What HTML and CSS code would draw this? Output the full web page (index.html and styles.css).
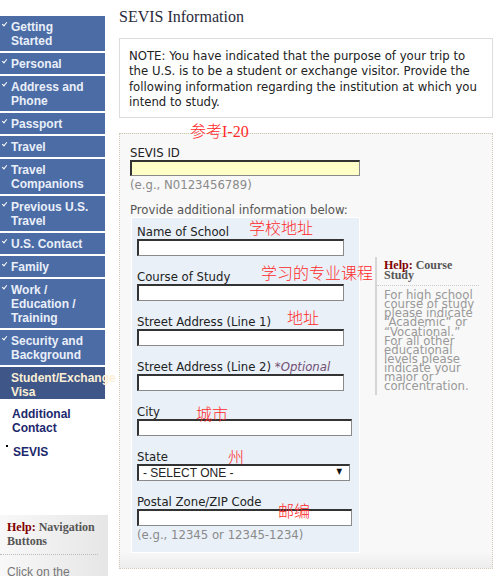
FILE: index.html
```html
<!DOCTYPE html>
<html lang="en">
<head>
    <meta charset="UTF-8">
    <meta name="viewport" content="width=device-width, initial-scale=1.0">
    <title>SEVIS Information</title>
    <link rel="stylesheet" href="styles.css">
</head>
<body>
    <div class="page">
        <!-- left navigation -->
        <aside class="side">
            <ul class="steps">
                <li class="done">Getting Started</li>
                <li class="done">Personal</li>
                <li class="done">Address and Phone</li>
                <li class="done">Passport</li>
                <li class="done">Travel</li>
                <li class="done">Travel Companions</li>
                <li class="done">Previous U.S. Travel</li>
                <li class="done">U.S. Contact</li>
                <li class="done">Family</li>
                <li class="done">Work / Education / Training</li>
                <li class="done">Security and Background</li>
                <li class="current">Student/Exchange Visa</li>
            </ul>
            <ul class="substeps">
                <li>Additional Contact</li>
                <li class="active">SEVIS</li>
            </ul>
            <div class="side-help">
                <h4><span class="help-word">Help:</span> Navigation Buttons</h4>
                <p>Click on the</p>
            </div>
        </aside>

        <!-- form content -->
        <main class="content">
            <h1>SEVIS Information</h1>
            <div class="note">
                NOTE: You have indicated that the purpose of your trip to the U.S. is to be a student or exchange visitor. Provide the following information regarding the institution at which you intend to study.
            </div>
            <div class="panel">
                <label class="field-label" for="sevis-id">SEVIS ID</label>
                <input type="text" id="sevis-id" class="text-input sevis-input">
                <div class="hint">(e.g., N0123456789)</div>
                <div class="intro">Provide additional information below:</div>
                <div class="school-row">
                    <div class="school-box">
                        <div class="field">
                            <label class="field-label" for="school-name">Name of School</label>
                            <input type="text" id="school-name" class="text-input">
                        </div>
                        <div class="field">
                            <label class="field-label" for="course">Course of Study</label>
                            <input type="text" id="course" class="text-input">
                        </div>
                        <div class="field">
                            <label class="field-label" for="street1">Street Address (Line 1)</label>
                            <input type="text" id="street1" class="text-input">
                        </div>
                        <div class="field">
                            <label class="field-label" for="street2">Street Address (Line 2) <em class="optional">*Optional</em></label>
                            <input type="text" id="street2" class="text-input">
                        </div>
                        <div class="field">
                            <label class="field-label" for="city">City</label>
                            <input type="text" id="city" class="text-input wide">
                        </div>
                        <div class="field">
                            <label class="field-label" for="state">State</label>
                            <div class="select-wrap">
                                <select id="state" class="select">
                                    <option>- SELECT ONE -</option>
                                </select>
                                <span class="select-arrow">&#9660;</span>
                            </div>
                        </div>
                        <div class="field last">
                            <label class="field-label" for="zip">Postal Zone/ZIP Code</label>
                            <input type="text" id="zip" class="text-input wide">
                            <div class="hint">(e.g., 12345 or 12345-1234)</div>
                        </div>
                    </div>
                    <div class="field-help">
                        <h4><span class="help-word">Help:</span> Course Study</h4>
                        <p>For high school course of study please indicate &ldquo;Academic&rdquo; or &ldquo;Vocational.&rdquo; For all other educational levels please indicate your major or concentration.</p>
                    </div>
                </div>
            </div>
        </main>

        <!-- red notes written over the screenshot -->
        <span class="mark mark-sevis">参考I-20</span>
        <span class="mark mark-school">学校地址</span>
        <span class="mark mark-course">学习的专业课程</span>
        <span class="mark mark-street">地址</span>
        <span class="mark mark-city">城市</span>
        <span class="mark mark-state">州</span>
        <span class="mark mark-zip">邮编</span>
    </div>
</body>
</html>
```

FILE: styles.css
```css
body {
    margin: 0;
    background: #fff;
}
.page {
    position: relative;
    display: flex;
    align-items: flex-start;
    width: 502px;
    height: 577px;
    overflow: hidden;
}

/* left navigation */
.side {
    width: 108px;
    flex: none;
    padding-top: 16px;
    font-family: "Liberation Sans", Arial, sans-serif;
}
.steps {
    list-style: none;
    margin: 0;
    padding: 0;
    width: 105px;
}
.steps li {
    position: relative;
    padding: 4px 12px 3px 11px;
    margin-bottom: 2px;
    background-color: #4c6ca6;
    color: #e9eff9;
    font-size: 12px;
    font-weight: bold;
    line-height: 14px;
}
.steps li.done::before {
    content: "";
    position: absolute;
    left: 3px;
    top: 5px;
    width: 2px;
    height: 4px;
    border: solid #fff;
    border-width: 0 1px 1px 0;
    transform: rotate(40deg);
}
.steps li.current {
    margin-bottom: 0;
    padding-bottom: 0;
    background-color: #3f5688;
    color: #fbefd6;
}
.substeps {
    list-style: none;
    margin: 0;
    padding: 8px 0 0;
}
.substeps li {
    position: relative;
    padding-left: 12px;
    margin-bottom: 10px;
    color: #1c286c;
    font-size: 12px;
    font-weight: bold;
    line-height: 14px;
}
.substeps li.active {
    padding-left: 13px;
}
.substeps li.active::before {
    content: "";
    position: absolute;
    left: 6px;
    top: 0;
    width: 2px;
    height: 2px;
    background: #000;
}
.side-help {
    margin-top: 56px;
    height: 61px;
    background: linear-gradient(to right, #f8f8f8, #e6e6e6);
}
.side-help h4 {
    margin: 0 10px 0 0;
    padding: 5px 0 6px 7px;
    border-bottom: 1px dotted #bbb;
    font: bold 12px/14px "Liberation Serif", "Times New Roman", serif;
    color: #555;
}
.help-word {
    color: #800000;
}
.side-help p {
    margin: 10px 0 0 7px;
    font-size: 12px;
    line-height: 14px;
    color: #777;
}

/* main column */
.content {
    width: 374px;
    margin-left: 11px;
    font-family: "DejaVu Sans Condensed", "DejaVu Sans", sans-serif;
    font-size: 13px;
    color: #222;
}
.content h1 {
    margin: 8px 0 0;
    font: normal 16px/18px "Liberation Serif", "Times New Roman", serif;
    color: #2b2b3b;
}
.note {
    margin-top: 12px;
    padding: 9px 9px 8px;
    border: 1px solid #dcdcdc;
    line-height: 15.3px;
    color: #222;
}
.panel {
    margin-top: 15px;
    padding: 11px 10px 15px;
    border: 1px dotted #d4cab8;
    background: linear-gradient(to bottom, #f8f8f8 calc(100% - 16px), #ececec 100%);
}
.field-label {
    display: block;
    line-height: 15px;
    color: #222;
}
.optional {
    color: #724e72;
}
.text-input {
    display: block;
    box-sizing: border-box;
    width: 207px;
    height: 17px;
    margin: 0;
    padding: 0 3px;
    border-style: solid;
    border-width: 2px 1px 1px 2px;
    border-color: #333 #8a8a8a #8a8a8a #333;
    background-color: #fff;
    font: inherit;
}
.text-input.wide {
    width: 215px;
}
.sevis-input {
    width: 230px;
    height: 16px;
    background-color: #ffffc8;
}
.hint {
    margin-top: 1px;
    line-height: 15px;
    color: #8a8a8a;
}
.intro {
    margin-top: 10px;
    line-height: 15px;
    color: #555;
}
.school-row {
    display: flex;
    align-items: flex-start;
}
.school-box {
    flex: none;
    box-sizing: border-box;
    width: 229px;
    margin-left: 1px;
    padding: 6px 0 10px 5px;
    border: 1px solid #fff;
    background-color: #e9f0f8;
}
.field {
    margin-bottom: 13px;
}
.field.last {
    margin-bottom: 0;
}
.select-wrap {
    position: relative;
    width: 213px;
}
.select {
    display: block;
    box-sizing: border-box;
    width: 213px;
    height: 17px;
    margin: 0;
    padding: 0 0 0 4px;
    appearance: none;
    border-style: solid;
    border-width: 2px 1px 1px 2px;
    border-color: #333 #8a8a8a #8a8a8a #333;
    border-radius: 0;
    background-color: #fff;
    font: 12px "Liberation Sans", Arial, sans-serif;
    color: #222;
}
.select-arrow {
    position: absolute;
    right: 8px;
    top: 4px;
    font-size: 8px;
    line-height: 8px;
    color: #111;
}
.field-help {
    width: 102px;
    margin: 40px 0 0 15px;
    padding-bottom: 5px;
    border-left: 2px solid #d6d6d6;
}
.field-help h4 {
    margin: 0;
    padding: 4px 0 5px 7px;
    border-bottom: 1px dotted #ccc;
    font: bold 12px/9.5px "Liberation Serif", "Times New Roman", serif;
    color: #555;
}
.field-help p {
    margin: 4px 0 0;
    padding-left: 7px;
    font-size: 13px;
    line-height: 9.1px;
    color: #999;
}

/* red notes */
.mark {
    position: absolute;
    font: 300 16px/16px "Liberation Serif", "Noto Sans CJK SC", serif;
    color: #ff2a2a;
    white-space: nowrap;
}
.mark-sevis { left: 190px; top: 124px; }
.mark-school { left: 249px; top: 221px; }
.mark-course { left: 261px; top: 266px; }
.mark-street { left: 287px; top: 311px; }
.mark-city { left: 196px; top: 407px; }
.mark-state { left: 228px; top: 450px; }
.mark-zip { left: 278px; top: 504px; }
```
